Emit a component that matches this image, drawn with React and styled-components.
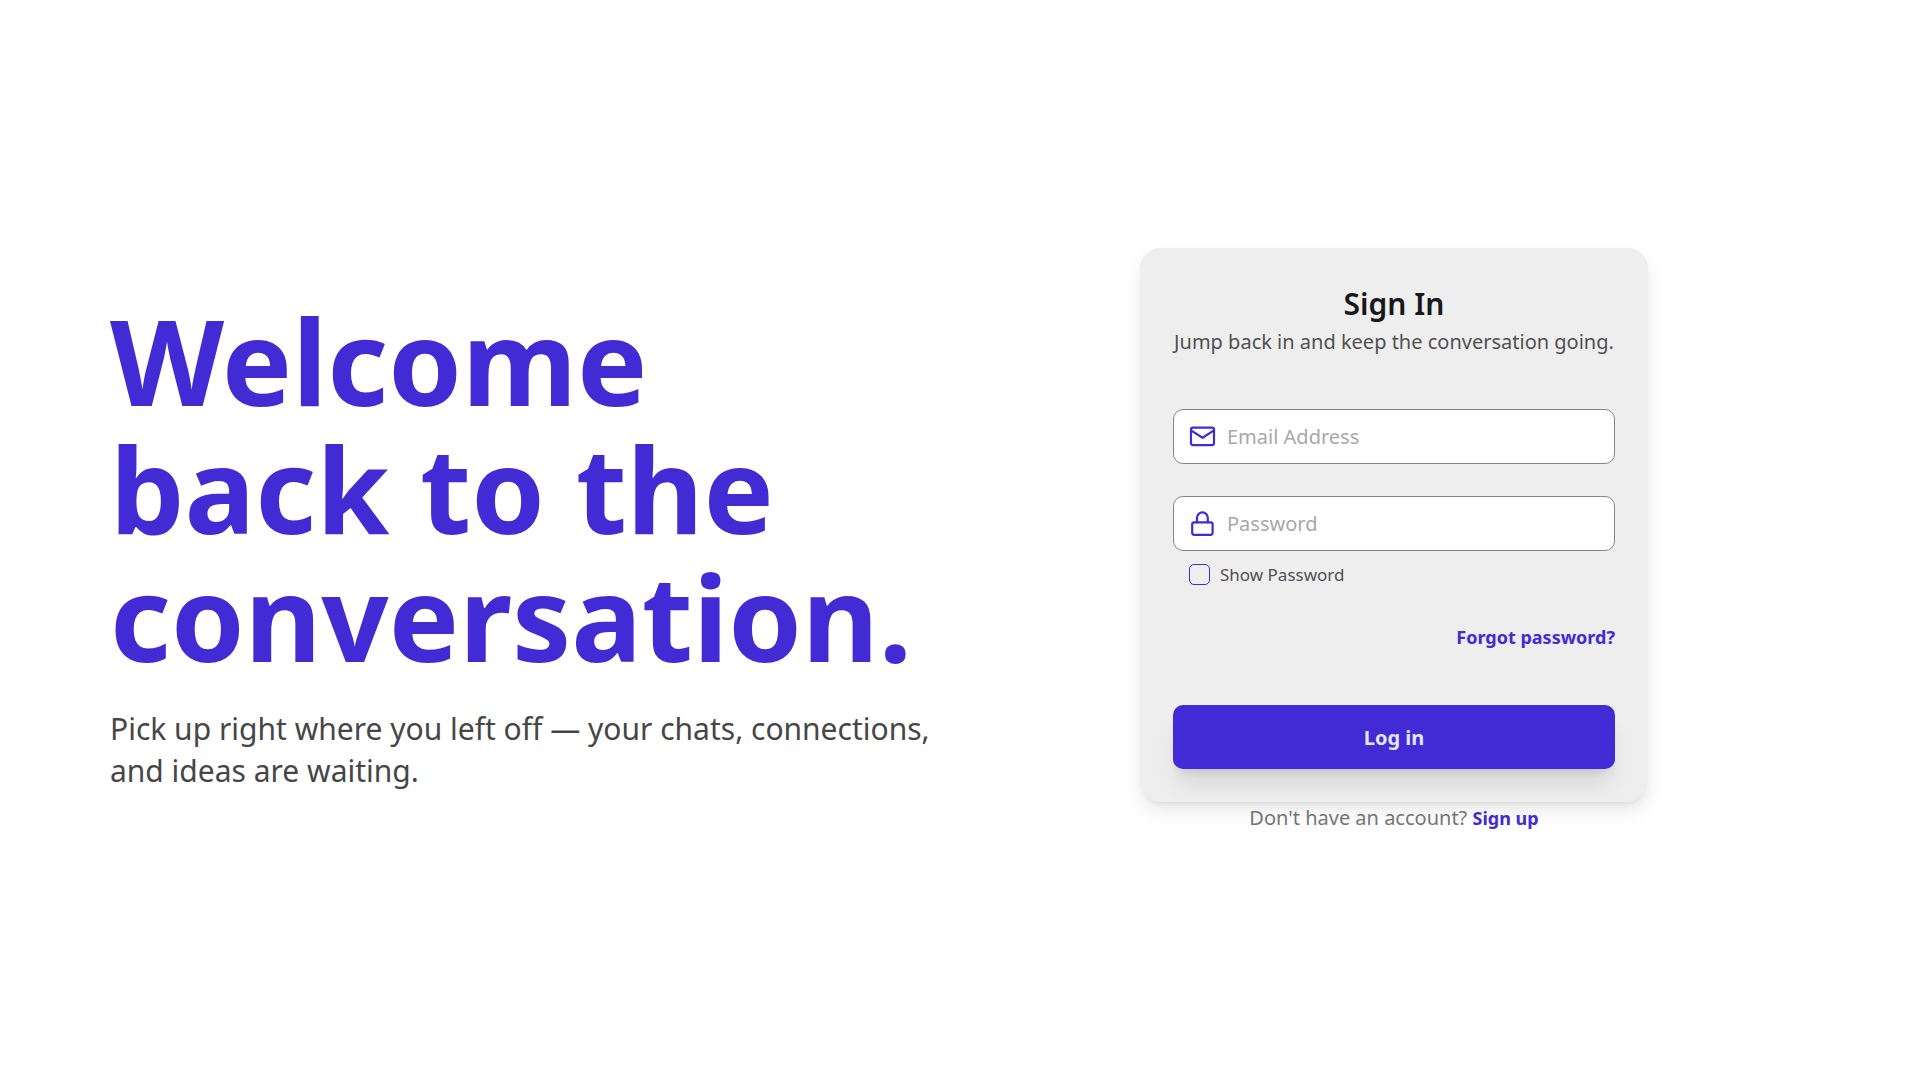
import React, { useState } from 'react';
import styled, { createGlobalStyle, ThemeProvider } from 'styled-components';

const theme = {
  primary: '#422ad5',
  primaryContent: '#e0e7ff',
  page: '#ffffff',
  surface: '#eeeeee',
  heading: '#18181b',
  text: '#464646',
  soft: '#505050',
  muted: '#757575',
  placeholder: '#a8a8a8',
  outline: '#858585',
};

const GlobalStyle = createGlobalStyle`
  *, *::before, *::after { box-sizing: border-box; }
  body {
    margin: 0;
    background: ${theme.page};
    font-family: 'Noto Sans', 'Open Sans', sans-serif;
  }
  h1, h2, p { margin: 0; }
  input, button { font: inherit; }
`;

const Page = styled.main`
  min-height: 100vh;
  padding: 0 110px;
  display: grid;
  grid-template-columns: 1fr 1fr;
  gap: 36px;
  align-items: center;

  @media (max-width: 1400px) {
    grid-template-columns: 1fr;
    padding: 32px;
  }
`;

const Hero = styled.section`
  display: flex;
  flex-direction: column;
  gap: 27px;
  padding-top: 8px;
`;

const HeroTitle = styled.h1`
  color: ${({ theme }) => theme.primary};
  font-size: 118px;
  font-weight: 700;
  line-height: 128px;
`;

const HeroText = styled.p`
  color: ${({ theme }) => theme.text};
  font-size: 30px;
  line-height: 42px;
`;

const Panel = styled.section`
  padding-top: 2px;
  display: flex;
  flex-direction: column;
  align-items: center;
`;

const Card = styled.form`
  width: 100%;
  max-width: 508px;
  padding: 32px;
  display: flex;
  flex-direction: column;
  border: 1px solid #efefef;
  border-radius: 20px;
  background: ${({ theme }) => theme.surface};
  box-shadow: 0 10px 20px -2px rgba(0, 0, 0, 0.1), 0 4px 6px -4px rgba(0, 0, 0, 0.1);
`;

const CardHeader = styled.header`
  margin-bottom: 52px;
  text-align: center;
`;

const CardTitle = styled.h2`
  color: ${({ theme }) => theme.heading};
  font-size: 30px;
  font-weight: 600;
  line-height: 46px;
`;

const CardText = styled.p`
  color: ${({ theme }) => theme.soft};
  font-size: 20px;
  line-height: 30px;
`;

const Fields = styled.div`
  display: flex;
  flex-direction: column;
  gap: 32px;
`;

const Field = styled.label`
  height: 55px;
  padding: 0 14px;
  display: flex;
  align-items: center;
  gap: 9px;
  border: 1px solid ${({ theme }) => theme.outline};
  border-radius: 10px;
  background: #ffffff;
  cursor: text;
`;

const FieldIcon = styled.svg`
  width: 30px;
  height: 30px;
  flex: none;
  fill: none;
  stroke: ${({ theme }) => theme.primary};
  stroke-width: 2.2;
  stroke-linecap: round;
  stroke-linejoin: round;
`;

const FieldInput = styled.input`
  flex: 1;
  min-width: 0;
  padding: 0;
  border: 0;
  outline: 0;
  background: transparent;
  color: ${({ theme }) => theme.heading};
  font-size: 20px;
  line-height: 30px;

  &::placeholder {
    color: ${({ theme }) => theme.placeholder};
    opacity: 1;
  }
`;

const CheckRow = styled.label`
  margin: 13px 16px 40px;
  display: flex;
  align-items: center;
  gap: 10px;
  color: ${({ theme }) => theme.soft};
  font-size: 17px;
  line-height: 21px;
`;

const Checkbox = styled.input`
  appearance: none;
  width: 21px;
  height: 21px;
  margin: 0;
  flex: none;
  border: 1px solid ${({ theme }) => theme.primary};
  border-radius: 5px;

  &:checked {
    background: ${({ theme }) => theme.primary};
    box-shadow: inset 0 0 0 4px ${({ theme }) => theme.surface};
  }
`;

const TextLink = styled.a`
  color: ${({ theme }) => theme.primary};
  font-size: 18px;
  font-weight: 700;
  line-height: 24px;
  text-decoration: none;
`;

const ForgotRow = styled.div`
  display: flex;
  justify-content: flex-end;
  margin-bottom: 56px;
`;

const SubmitButton = styled.button`
  height: 64px;
  border: 0;
  border-radius: 10px;
  background: ${({ theme }) => theme.primary};
  color: ${({ theme }) => theme.primaryContent};
  font-size: 20px;
  font-weight: 700;
  cursor: pointer;
  box-shadow: 0 20px 25px -5px rgba(0, 0, 0, 0.1), 0 8px 10px -6px rgba(0, 0, 0, 0.1);
`;

const Footer = styled.p`
  color: ${({ theme }) => theme.muted};
  font-size: 20px;
  line-height: 32px;
`;

const MailIcon = () => (
  <FieldIcon viewBox="0 0 30 30" aria-hidden="true">
    <rect x="3" y="5.6" width="23" height="17.5" rx="2" />
    <path d="M3 8.4 14.5 15.8 26 8.4" />
  </FieldIcon>
);

const LockIcon = () => (
  <FieldIcon viewBox="0 0 30 30" aria-hidden="true">
    <rect x="4.2" y="13.3" width="20.4" height="12.5" rx="2" />
    <path d="M9 13.3V8.8a5.4 5.4 0 0 1 10.8 0v4.5" />
  </FieldIcon>
);

export default function App() {
  const [showPassword, setShowPassword] = useState(false);

  return (
    <ThemeProvider theme={theme}>
      <GlobalStyle />
      <Page>
        <Hero>
          <HeroTitle>Welcome back to the conversation.</HeroTitle>
          <HeroText>
            Pick up right where you left off — your chats, connections, and ideas are waiting.
          </HeroText>
        </Hero>
        <Panel>
          <Card onSubmit={(event) => event.preventDefault()}>
            <CardHeader>
              <CardTitle>Sign In</CardTitle>
              <CardText>Jump back in and keep the conversation going.</CardText>
            </CardHeader>
            <Fields>
              <Field htmlFor="email">
                <MailIcon />
                <FieldInput id="email" type="email" placeholder="Email Address" aria-label="Email Address" />
              </Field>
              <Field htmlFor="password">
                <LockIcon />
                <FieldInput
                  id="password"
                  type={showPassword ? 'text' : 'password'}
                  placeholder="Password"
                  aria-label="Password"
                />
              </Field>
            </Fields>
            <CheckRow htmlFor="show-password">
              <Checkbox
                id="show-password"
                type="checkbox"
                checked={showPassword}
                onChange={(event) => setShowPassword(event.target.checked)}
              />
              Show Password
            </CheckRow>
            <ForgotRow>
              <TextLink href="#forgot">Forgot password?</TextLink>
            </ForgotRow>
            <SubmitButton type="submit">Log in</SubmitButton>
          </Card>
          <Footer>
            Don't have an account? <TextLink href="#signup">Sign up</TextLink>
          </Footer>
        </Panel>
      </Page>
    </ThemeProvider>
  );
}
